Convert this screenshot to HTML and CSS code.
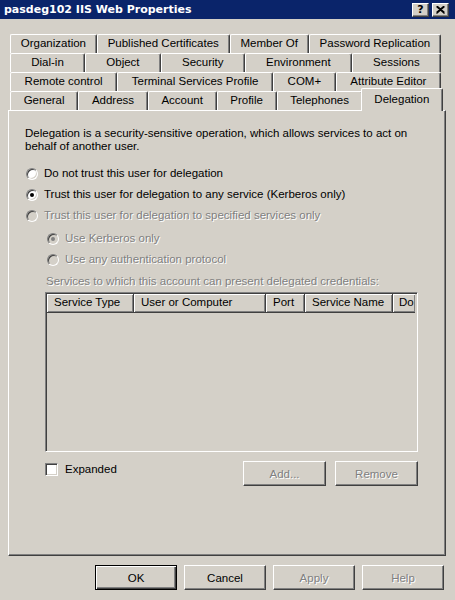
FILE: index.html
```html
<!DOCTYPE html>
<html>
<head>
<meta charset="utf-8">
<title>pasdeg102 IIS Web Properties</title>
<link rel="stylesheet" href="styles.css">
</head>
<body>
<div class="window">
  <div class="titlebar">
    <span class="title">pasdeg102 IIS Web Properties</span>
    <div class="caption-buttons">
      <span class="cap-btn help-btn">?</span>
      <span class="cap-btn close-btn">
        <svg width="9" height="8" viewBox="0 0 9 8"><path d="M0.5 0.5 L8.5 7.5 M8.5 0.5 L0.5 7.5 M1.5 0.5 L8.5 6.6 M7.5 0.5 L0.5 6.6" stroke="#000" stroke-width="1.3" fill="none"/></svg>
      </span>
    </div>
  </div>

  <div class="dialog">
    <div class="tabs">
      <div class="tab-row">
        <span class="tab">Organization</span>
        <span class="tab">Published Certificates</span>
        <span class="tab">Member Of</span>
        <span class="tab">Password Replication</span>
      </div>
      <div class="tab-row">
        <span class="tab">Dial-in</span>
        <span class="tab">Object</span>
        <span class="tab">Security</span>
        <span class="tab">Environment</span>
        <span class="tab">Sessions</span>
      </div>
      <div class="tab-row">
        <span class="tab">Remote control</span>
        <span class="tab">Terminal Services Profile</span>
        <span class="tab">COM+</span>
        <span class="tab">Attribute Editor</span>
      </div>
      <div class="tab-row">
        <span class="tab">General</span>
        <span class="tab">Address</span>
        <span class="tab">Account</span>
        <span class="tab">Profile</span>
        <span class="tab">Telephones</span>
        <span class="tab selected">Delegation</span>
      </div>
    </div>

    <div class="panel">
      <p class="intro">Delegation is a security-sensitive operation, which allows services to act on<br>behalf of another user.</p>

      <div class="options">
        <div class="option"><span class="radio"></span>Do not trust this user for delegation</div>
        <div class="option"><span class="radio checked"></span>Trust this user for delegation to any service (Kerberos only)</div>
        <div class="option disabled"><span class="radio"></span>Trust this user for delegation to specified services only</div>
      </div>

      <div class="options sub">
        <div class="option disabled"><span class="radio checked"></span>Use Kerberos only</div>
        <div class="option disabled"><span class="radio"></span>Use any authentication protocol</div>
      </div>

      <div class="services-label disabled">Services to which this account can present delegated credentials:</div>

      <div class="listbox">
        <div class="list-header">
          <span class="col col-type">Service Type</span>
          <span class="col col-user">User or Computer</span>
          <span class="col col-port">Port</span>
          <span class="col col-name">Service Name</span>
          <span class="col col-domain">Do</span>
        </div>
      </div>

      <div class="list-footer">
        <div class="check-row"><span class="checkbox"></span>Expanded</div>
        <div class="list-actions">
          <span class="btn wide disabled">Add...</span>
          <span class="btn wide disabled">Remove</span>
        </div>
      </div>
    </div>

    <div class="dialog-buttons">
      <span class="btn default">OK</span>
      <span class="btn">Cancel</span>
      <span class="btn disabled">Apply</span>
      <span class="btn disabled">Help</span>
    </div>
  </div>
</div>
</body>
</html>
```

FILE: styles.css
```css
* {
  box-sizing: border-box;
}

body {
  margin: 0;
  background: #d4d0c8;
  font-family: "Liberation Sans", Arial, sans-serif;
  font-size: 11.5px;
  color: #000;
}

.window {
  width: 455px;
  height: 600px;
  overflow: hidden;
}

/* caption bar */
.titlebar {
  height: 19px;
  background: #0a246a;
  display: flex;
  align-items: center;
  justify-content: space-between;
  padding: 0 6px 0 4px;
}

.title {
  color: #fff;
  font-family: "DejaVu Sans", Verdana, sans-serif;
  font-weight: bold;
  font-size: 11px;
  white-space: nowrap;
}

.caption-buttons {
  display: flex;
  gap: 3px;
}

.cap-btn {
  width: 17px;
  height: 14px;
  background: #d4d0c8;
  border: 1px solid;
  border-color: #fff #404040 #404040 #fff;
  box-shadow: inset -1px -1px #808080;
  display: flex;
  align-items: center;
  justify-content: center;
}

.help-btn {
  font-family: "DejaVu Sans", sans-serif;
  font-weight: bold;
  font-size: 11px;
  line-height: 12px;
}

/* dialog body */
.dialog {
  padding: 15px 9px 0 8px;
}

.tabs {
  padding: 0 5px 0 2px;
}

.tab-row {
  display: flex;
  height: 19px;
}

.tab {
  flex: 1 1 auto;
  padding: 0 6px;
  text-align: center;
  line-height: 17px;
  white-space: nowrap;
  background: #d4d0c8;
  border-top: 1px solid #fff;
  border-left: 1px solid #fff;
  border-right: 1px solid #404040;
  border-top-left-radius: 2px;
  border-top-right-radius: 2px;
  box-shadow: inset -1px 0 #808080;
}

.tab.selected {
  position: relative;
  z-index: 1;
  margin: -3px -2px -1px -2px;
  line-height: 21px;
}

.panel {
  height: 446px;
  border: 1px solid;
  border-color: #fff #404040 #404040 #fff;
  box-shadow: inset -1px -1px #808080;
  padding: 16px 0 0 16px;
}

.intro {
  margin: 0;
  line-height: 13px;
}

.options {
  display: flex;
  flex-direction: column;
  gap: 8px;
  margin-top: 14px;
  margin-left: 1px;
}

.options.sub {
  margin-top: 10px;
  margin-left: 22px;
}

.option {
  display: flex;
  align-items: center;
  height: 13px;
  line-height: 13px;
  white-space: nowrap;
}

.disabled {
  color: #808080;
  text-shadow: 1px 1px #fff;
}

.radio {
  position: relative;
  width: 12px;
  height: 12px;
  margin-right: 6px;
  border-radius: 50%;
  background: #fff;
  border: 1px solid;
  border-color: #808080 #fff #fff #808080;
  box-shadow: inset 1px 1px #404040, inset -1px -1px #d4d0c8;
  flex: none;
}

.disabled .radio {
  background: #d4d0c8;
}

.radio.checked::after {
  content: "";
  position: absolute;
  left: 3px;
  top: 3px;
  width: 4px;
  height: 4px;
  border-radius: 50%;
  background: #000;
}

.disabled .radio.checked::after {
  background: #808080;
}

.services-label {
  margin: 9px 0 0 21px;
  line-height: 13px;
  white-space: nowrap;
}

.listbox {
  width: 373px;
  height: 160px;
  margin: 4px 0 0 20px;
  border: 1px solid;
  border-color: #808080 #fff #fff #808080;
  box-shadow: inset 1px 1px #404040, inset -1px -1px #d4d0c8;
  padding: 1px 2px 1px 1px;
}

.list-header {
  display: flex;
  height: 19px;
  overflow: hidden;
}

.col {
  flex: none;
  padding-left: 7px;
  line-height: 17px;
  white-space: nowrap;
  border-right: 1px solid #404040;
  border-bottom: 1px solid #404040;
  box-shadow: inset 1px 1px #fff, inset -1px -1px #808080;
}

.col-type { width: 87px; }
.col-user { width: 132px; }
.col-port { width: 39px; }
.col-name { width: 88px; }
.col-domain { flex: 1 1 auto; padding-left: 6px; border-right: 0; }

.list-footer {
  width: 373px;
  margin: 9px 0 0 20px;
  display: flex;
  justify-content: space-between;
  align-items: flex-start;
}

.check-row {
  display: flex;
  align-items: center;
  height: 13px;
  line-height: 13px;
  margin-top: 2px;
}

.checkbox {
  width: 13px;
  height: 13px;
  margin-right: 7px;
  background: #fff;
  border: 1px solid;
  border-color: #808080 #fff #fff #808080;
  box-shadow: inset 1px 1px #404040, inset -1px -1px #d4d0c8;
}

.list-actions {
  display: flex;
  gap: 9px;
}

/* push buttons */
.btn {
  width: 82px;
  height: 25px;
  display: flex;
  align-items: center;
  justify-content: center;
  background: #d4d0c8;
  border: 1px solid;
  border-color: #fff #404040 #404040 #fff;
  box-shadow: inset -1px -1px #808080;
}

.btn.wide {
  width: 83px;
}

.btn.default {
  border-color: #000;
  box-shadow: inset 1px 1px #fff, inset -1px -1px #404040, inset -2px -2px #808080;
}

.dialog-buttons {
  display: flex;
  justify-content: flex-end;
  gap: 7px;
  margin: 9px 2px 0 0;
}
```
